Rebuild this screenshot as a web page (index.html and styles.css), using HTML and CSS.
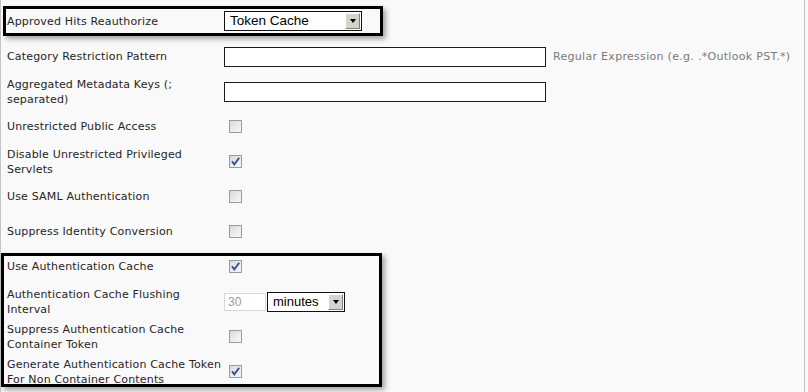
FILE: index.html
```html
<!DOCTYPE html>
<html>
<head>
<meta charset="utf-8">
<link rel="stylesheet" href="styles.css">
</head>
<body>
<div class="form">
  <div class="group group-top">
    <div class="row">
      <div class="label">Approved Hits Reauthorize</div>
      <div class="ctrl">
        <div class="select select-wide"><span class="sel-text">Token Cache</span><span class="sel-btn"><span class="tri"></span></span></div>
      </div>
    </div>
  </div>
  <div class="row">
    <div class="label">Category Restriction Pattern</div>
    <div class="ctrl"><span class="text-input"></span><span class="help">Regular Expression (e.g. .*Outlook PST.*)</span></div>
  </div>
  <div class="row">
    <div class="label">Aggregated Metadata Keys (; separated)</div>
    <div class="ctrl"><span class="text-input"></span></div>
  </div>
  <div class="row">
    <div class="label">Unrestricted Public Access</div>
    <div class="ctrl"><span class="cb"></span></div>
  </div>
  <div class="row">
    <div class="label">Disable Unrestricted Privileged Servlets</div>
    <div class="ctrl"><span class="cb checked"><svg viewBox="0 0 11 11" width="11" height="11"><path d="M2 5.2 L4.3 8.3 L9.2 1.8" fill="none" stroke="#3a4d9a" stroke-width="1.9"/></svg></span></div>
  </div>
  <div class="row">
    <div class="label">Use SAML Authentication</div>
    <div class="ctrl"><span class="cb"></span></div>
  </div>
  <div class="row">
    <div class="label">Suppress Identity Conversion</div>
    <div class="ctrl"><span class="cb"></span></div>
  </div>
  <div class="group group-bottom">
    <div class="row">
      <div class="label">Use Authentication Cache</div>
      <div class="ctrl"><span class="cb checked"><svg viewBox="0 0 11 11" width="11" height="11"><path d="M2 5.2 L4.3 8.3 L9.2 1.8" fill="none" stroke="#3a4d9a" stroke-width="1.9"/></svg></span></div>
    </div>
    <div class="row">
      <div class="label">Authentication Cache Flushing Interval</div>
      <div class="ctrl ctrl-interval">
        <span class="num-input">30</span>
        <div class="select select-small"><span class="sel-text">minutes</span><span class="sel-btn"><span class="tri"></span></span></div>
      </div>
    </div>
    <div class="row">
      <div class="label">Suppress Authentication Cache Container Token</div>
      <div class="ctrl"><span class="cb"></span></div>
    </div>
    <div class="row">
      <div class="label">Generate Authentication Cache Token For Non Container Contents</div>
      <div class="ctrl"><span class="cb checked"><svg viewBox="0 0 11 11" width="11" height="11"><path d="M2 5.2 L4.3 8.3 L9.2 1.8" fill="none" stroke="#3a4d9a" stroke-width="1.9"/></svg></span></div>
    </div>
  </div>
</div>
</body>
</html>
```
FILE: styles.css
```css
html, body {
  margin: 0;
  padding: 0;
  background: #f9f9f9;
}
.form {
  width: 805px;
  height: 392px;
  box-sizing: border-box;
  border-left: 1px solid #c4c4c4;
  border-right: 1px solid #c4c4c4;
  padding-top: 4px;
  font-family: "DejaVu Sans", Verdana, sans-serif;
  font-size: 11px;
  color: #262626;
}
.row {
  display: grid;
  grid-template-columns: 217px 1fr;
  align-items: center;
  height: 35px;
  padding-left: 6px;
}
.label {
  line-height: 15px;
  letter-spacing: 0.17px;
}
.ctrl {
  display: flex;
  align-items: center;
}
.group {
  position: relative;
}
.group::after {
  content: "";
  position: absolute;
  border: 3px solid #000;
  box-shadow: 3px 3px 5px rgba(0,0,0,0.35);
  pointer-events: none;
}
.group-top::after {
  left: 2px;
  top: 2px;
  width: 374px;
  height: 24px;
}
.group-bottom::after {
  left: 0px;
  top: 4px;
  width: 375px;
  height: 128px;
}
.text-input {
  display: block;
  width: 320px;
  height: 18px;
  background: #fff;
  border: 1px solid #1a1a1a;
}
.help {
  margin-left: 7px;
  font-size: 11px;
  letter-spacing: 0.3px;
  color: #7a7a7a;
}
.cb {
  display: block;
  width: 11px;
  height: 11px;
  margin-left: 5px;
  border: 1px solid #9a9a9a;
  background: linear-gradient(135deg, #d9d9d9 0%, #ececec 55%, #f6f6f6 100%);
  position: relative;
}
.cb svg {
  display: block;
}
.select {
  display: flex;
  align-items: stretch;
  background: #fff;
  border: 1px solid #111;
  box-sizing: border-box;
  font-family: "Liberation Sans", Arial, sans-serif;
  font-size: 13.5px;
  color: #000;
}
.select-wide {
  width: 138px;
  height: 20px;
  margin-top: -1px;
}
.select-small {
  width: 78px;
  height: 20px;
  margin-left: 1px;
  font-size: 13px;
}
.sel-text {
  flex: 1;
  padding-left: 5px;
  line-height: 18px;
}
.sel-btn {
  width: 15px;
  margin: 1px;
  background: #d6d3cc;
  border-top: 1px solid #fff;
  border-left: 1px solid #fff;
  border-right: 1px solid #808080;
  border-bottom: 1px solid #808080;
  box-sizing: border-box;
  display: flex;
  align-items: center;
  justify-content: center;
}
.tri {
  width: 0;
  height: 0;
  border-left: 3.5px solid transparent;
  border-right: 3.5px solid transparent;
  border-top: 4px solid #000;
}
.ctrl-interval {
  gap: 0;
}
.num-input {
  display: block;
  width: 37px;
  height: 16px;
  border: 1px solid #d8d8d8;
  background: #fff;
  font-family: "Liberation Sans", Arial, sans-serif;
  font-size: 12px;
  color: #999;
  line-height: 16px;
  padding-left: 3px;
}
```
